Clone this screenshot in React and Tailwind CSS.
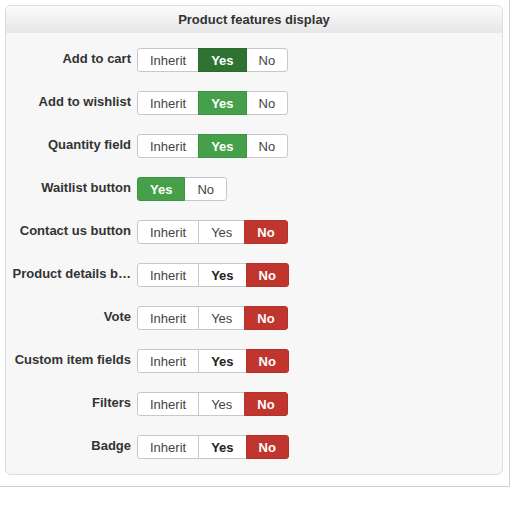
import React from 'react';

const rows = [
  { label: 'Add to cart', opts: ['Inherit', 'Yes', 'No'], sel: 'Yes', tone: 'dark' },
  { label: 'Add to wishlist', opts: ['Inherit', 'Yes', 'No'], sel: 'Yes' },
  { label: 'Quantity field', opts: ['Inherit', 'Yes', 'No'], sel: 'Yes' },
  { label: 'Waitlist button', opts: ['Yes', 'No'], sel: 'Yes' },
  { label: 'Contact us button', opts: ['Inherit', 'Yes', 'No'], sel: 'No' },
  { label: 'Product details b…', opts: ['Inherit', 'Yes', 'No'], sel: 'No', strong: true },
  { label: 'Vote', opts: ['Inherit', 'Yes', 'No'], sel: 'No' },
  { label: 'Custom item fields', opts: ['Inherit', 'Yes', 'No'], sel: 'No', strong: true },
  { label: 'Filters', opts: ['Inherit', 'Yes', 'No'], sel: 'No' },
  { label: 'Badge', opts: ['Inherit', 'Yes', 'No'], sel: 'No', strong: true },
];

const Toggle = ({ opts, sel, tone, strong }) => (
  <div className="flex">
    {opts.map((o, i) => {
      const active = o === sel;
      let cls = 'bg-white border-[#c8c8c8] text-[#444]';
      if (active && o === 'Yes') {
        cls = tone === 'dark'
          ? 'bg-[#2e7331] border-[#2a6a2d] text-white font-bold'
          : 'bg-[#46a049] border-[#3f9442] text-white font-bold';
      } else if (active && o === 'No') {
        cls = 'bg-[#c0362e] border-[#b3322b] text-white font-bold';
      } else if (strong && o === 'Yes') {
        cls = 'bg-white border-[#c8c8c8] text-[#222] font-bold';
      }
      const first = i === 0;
      const last = i === opts.length - 1;
      return (
        <div
          key={o}
          className={`h-[24px] px-[12px] border flex items-center text-[13px] leading-none ${cls} ${first ? 'rounded-l-[3px]' : '-ml-px'} ${last ? 'rounded-r-[3px]' : ''} ${active ? 'relative z-10' : ''}`}
        >
          {o}
        </div>
      );
    })}
  </div>
);

export default function App() {
  return (
    <div className="w-[510px] h-[487px] bg-white border-r border-b border-[#cfcfcf] pt-[5px] pl-[5px] font-['Liberation_Sans',Arial,sans-serif]">
      <div className="w-[498px] h-[470px] border border-[#dcdcdc] rounded-[6px] bg-[#f7f7f7] overflow-hidden">
        <div className="h-[27px] bg-gradient-to-b from-[#fbfbfb] to-[#e6e6e6] flex items-center justify-center text-[13px] font-bold text-[#333]">
          Product features display
        </div>
        <div className="pt-[15px] flex flex-col gap-[19px]">
          {rows.map((r) => (
            <div key={r.label} className="flex items-start h-[24px]">
              <div className="w-[125px] pl-[6px] pt-[2px] text-right text-[13px] font-bold text-[#333] leading-[18px] whitespace-nowrap">
                {r.label}
              </div>
              <div className="ml-[6px]">
                <Toggle opts={r.opts} sel={r.sel} tone={r.tone} strong={r.strong} />
              </div>
            </div>
          ))}
        </div>
      </div>
    </div>
  );
}
